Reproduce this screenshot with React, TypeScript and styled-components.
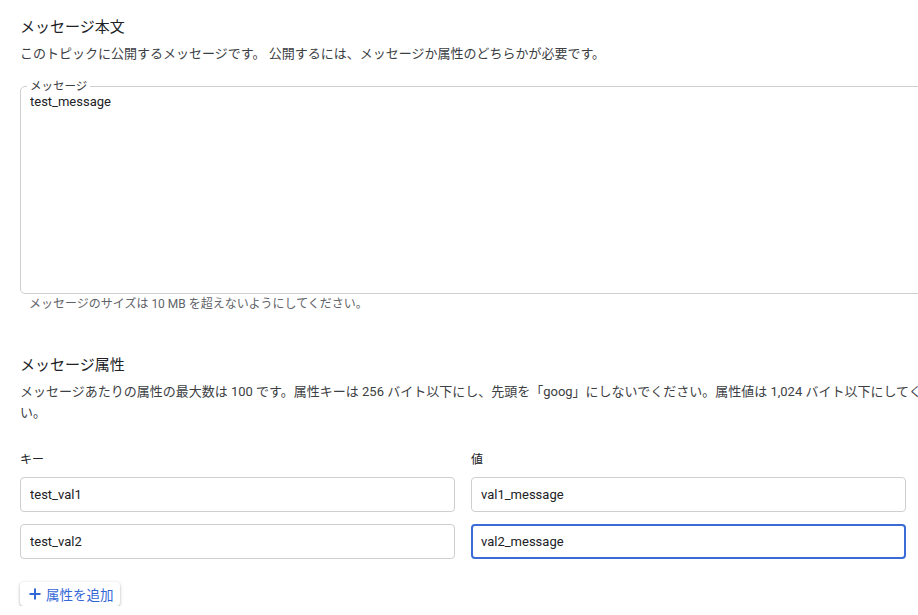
import styled, { createGlobalStyle } from "styled-components";

const GlobalStyle = createGlobalStyle`
  html, body {
    margin: 0;
    padding: 0;
    background: #ffffff;
    overflow: hidden;
  }
  body {
    font-family: Roboto, "Noto Sans CJK JP", sans-serif;
    color: #202124;
  }
`;

const Page = styled.div`
  padding: 17px 0 0 20px;
  width: 940px;
`;

const Section = styled.section<{ gap?: number }>`
  margin-bottom: ${(p) => p.gap ?? 0}px;
`;

const Heading = styled.h2`
  margin: 0;
  font-size: 15px;
  font-weight: 400;
  line-height: 20px;
  color: #202124;
`;

const Description = styled.p`
  margin: 6px 0 0;
  font-size: 13px;
  line-height: 21px;
  color: #3c4043;
  white-space: nowrap;
`;

const Outline = styled.fieldset`
  margin: 16px 0 0;
  padding: 0 9px;
  width: 920px;
  height: 214px;
  box-sizing: border-box;
  border: 1px solid #cfcfcf;
  border-radius: 5px;
`;

const Legend = styled.legend`
  margin-left: -3px;
  padding: 0 3px;
  font-size: 11.5px;
  line-height: 12px;
  color: #3c4043;
`;

const MessageArea = styled.textarea`
  display: block;
  width: 100%;
  height: 180px;
  margin: 2px 0 0;
  padding: 0;
  border: none;
  outline: none;
  resize: none;
  font-family: Roboto, "Noto Sans CJK JP", sans-serif;
  font-size: 13px;
  line-height: 16px;
  color: #202124;
`;

const Hint = styled.div`
  margin: 3px 0 0 9px;
  font-size: 12px;
  line-height: 14px;
  color: #5f6368;
`;

const Grid = styled.div`
  display: grid;
  grid-template-columns: 435px 435px;
  column-gap: 16px;
  row-gap: 12px;
  margin-top: 29px;
`;

const ColumnLabel = styled.div`
  font-size: 12px;
  line-height: 16px;
  color: #202124;
  margin-bottom: -3px;
`;

const Field = styled.input<{ focused?: boolean }>`
  box-sizing: border-box;
  width: 100%;
  height: 35px;
  padding: 0 9px;
  border: ${(p) => (p.focused ? "2px solid #3a6bd6" : "1px solid #cfcfcf")};
  padding-left: ${(p) => (p.focused ? 8 : 9)}px;
  border-radius: 4px;
  outline: none;
  font-family: Roboto, "Noto Sans CJK JP", sans-serif;
  font-size: 13px;
  color: #202124;
  background: #fff;
  caret-color: #3367d6;
`;

const AddButton = styled.button`
  display: flex;
  align-items: center;
  gap: 5px;
  margin-top: 23px;
  height: 24px;
  padding: 0 6px 0 9px;
  border: none;
  border-radius: 4px;
  background: #ffffff;
  box-shadow: 0 1px 2px rgba(60, 64, 67, 0.25), 0 1px 3px 1px rgba(60, 64, 67, 0.12);
  color: #3367d6;
  font-family: Roboto, "Noto Sans CJK JP", sans-serif;
  font-size: 13.5px;
  cursor: pointer;
`;

const PlusIcon = () => (
  <svg width="12" height="12" viewBox="0 0 12 12" aria-hidden="true">
    <path d="M6 0.5v11M0.5 6h11" stroke="#3367d6" strokeWidth="2" fill="none" />
  </svg>
);

const attributes = [
  { key: "test_val1", value: "val1_message", focused: false },
  { key: "test_val2", value: "val2_message", focused: true },
];

export default function App() {
  return (
    <>
      <GlobalStyle />
      <Page>
        <Section gap={44}>
          <Heading>メッセージ本文</Heading>
          <Description>
            このトピックに公開するメッセージです。 公開するには、メッセージか属性のどちらかが必要です。
          </Description>
          <Outline>
            <Legend>メッセージ</Legend>
            <MessageArea defaultValue="test_message" />
          </Outline>
          <Hint>メッセージのサイズは 10 MB を超えないようにしてください。</Hint>
        </Section>
        <Section>
          <Heading>メッセージ属性</Heading>
          <Description>
            メッセージあたりの属性の最大数は 100 です。属性キーは 256 バイト以下にし、先頭を「goog」にしないでください。属性値は 1,024 バイト以下にしてくださ
            <br />
            い。
          </Description>
          <Grid>
            <ColumnLabel>キー</ColumnLabel>
            <ColumnLabel>値</ColumnLabel>
            {attributes.map((a) => (
              <>
                <Field key={a.key} defaultValue={a.key} />
                <Field key={a.value} defaultValue={a.value} focused={a.focused} autoFocus={a.focused} />
              </>
            ))}
          </Grid>
          <AddButton>
            <PlusIcon />
            属性を追加
          </AddButton>
        </Section>
      </Page>
    </>
  );
}
